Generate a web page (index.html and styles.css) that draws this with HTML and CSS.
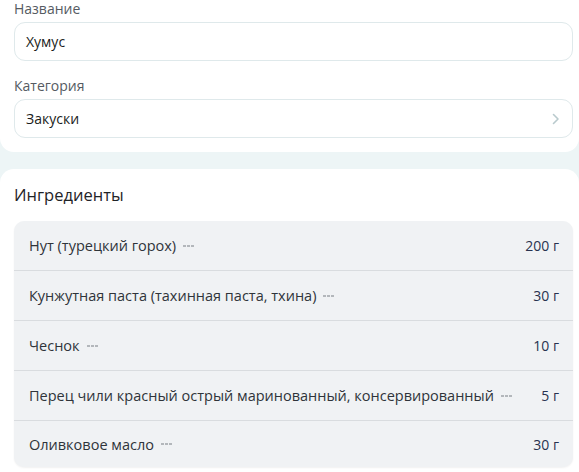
FILE: index.html
```html
<!DOCTYPE html>
<html lang="ru">
<head>
<meta charset="utf-8">
<link rel="stylesheet" href="styles.css">
</head>
<body>
<section class="card top">
  <div class="label first">Название</div>
  <div class="field">Хумус</div>
  <div class="label">Категория</div>
  <div class="field select">
    <span>Закуски</span>
    <svg class="chev" width="8" height="12" viewBox="0 0 8 12"><path d="M1.5 1.5 L6 6 L1.5 10.5" fill="none" stroke="#b9cacd" stroke-width="1.6" stroke-linecap="round" stroke-linejoin="round"/></svg>
  </div>
</section>
<section class="card bottom">
  <h2 class="title">Ингредиенты</h2>
  <div class="list">
    <div class="row"><span class="name">Нут (турецкий горох)<span class="dots"><i></i><i></i><i></i></span></span><span class="amt">200 г</span></div>
    <div class="row"><span class="name">Кунжутная паста (тахинная паста, тхина)<span class="dots"><i></i><i></i><i></i></span></span><span class="amt">30 г</span></div>
    <div class="row"><span class="name">Чеснок<span class="dots"><i></i><i></i><i></i></span></span><span class="amt">10 г</span></div>
    <div class="row"><span class="name">Перец чили красный острый маринованный, консервированный<span class="dots"><i></i><i></i><i></i></span></span><span class="amt">5 г</span></div>
    <div class="row last"><span class="name">Оливковое масло<span class="dots"><i></i><i></i><i></i></span></span><span class="amt">30 г</span></div>
  </div>
</section>
</body>
</html>
```
FILE: styles.css
```css
html, body {
  margin: 0;
  padding: 0;
  background: #edf5f6;
  font-family: "Open Sans", "Noto Sans", sans-serif;
  overflow: hidden;
}
.card {
  background: #ffffff;
  padding: 0 6px 0 14px;
}
.top {
  border-radius: 0 0 14px 14px;
  padding-bottom: 14px;
}
.label {
  font-size: 14px;
  line-height: 18px;
  color: #555b62;
  margin-top: 16px;
  margin-bottom: 4px;
}
.label.first {
  margin-top: 0;
  margin-bottom: 4px;
}
.field {
  box-sizing: border-box;
  height: 39px;
  border: 1.5px solid #dfe9eb;
  border-radius: 11px;
  padding: 0 11px;
  display: flex;
  align-items: center;
  font-size: 14px;
  color: #1a1d21;
}
.select {
  justify-content: space-between;
  padding-right: 12px;
}
.bottom {
  margin-top: 17px;
  border-radius: 14px 14px 0 0;
  padding-top: 14px;
  padding-bottom: 10px;
}
.title {
  margin: 0 0 14px;
  font-size: 16.5px;
  line-height: 24px;
  font-weight: 400;
  color: #1f2327;
}
.list {
  background: #f0f2f4;
  border-radius: 10px;
  box-shadow: 0 1px 2px rgba(0,0,0,0.06);
}
.row {
  height: 49px;
  display: flex;
  align-items: center;
  justify-content: space-between;
  padding: 0 14px 0 15px;
  font-size: 14.5px;
  color: #2f343a;
}
.row + .row {
  border-top: 1px solid #d9dcdf;
}
.row.last {
  height: 46px;
}
.name {
  display: flex;
  align-items: center;
}
.dots {
  display: inline-flex;
  gap: 1px;
  margin-left: 7px;
}
.dots i {
  display: block;
  width: 3px;
  height: 2px;
  background: #b3b7bb;
}
.amt {
  color: #28324f;
  font-size: 14px;
}
```
